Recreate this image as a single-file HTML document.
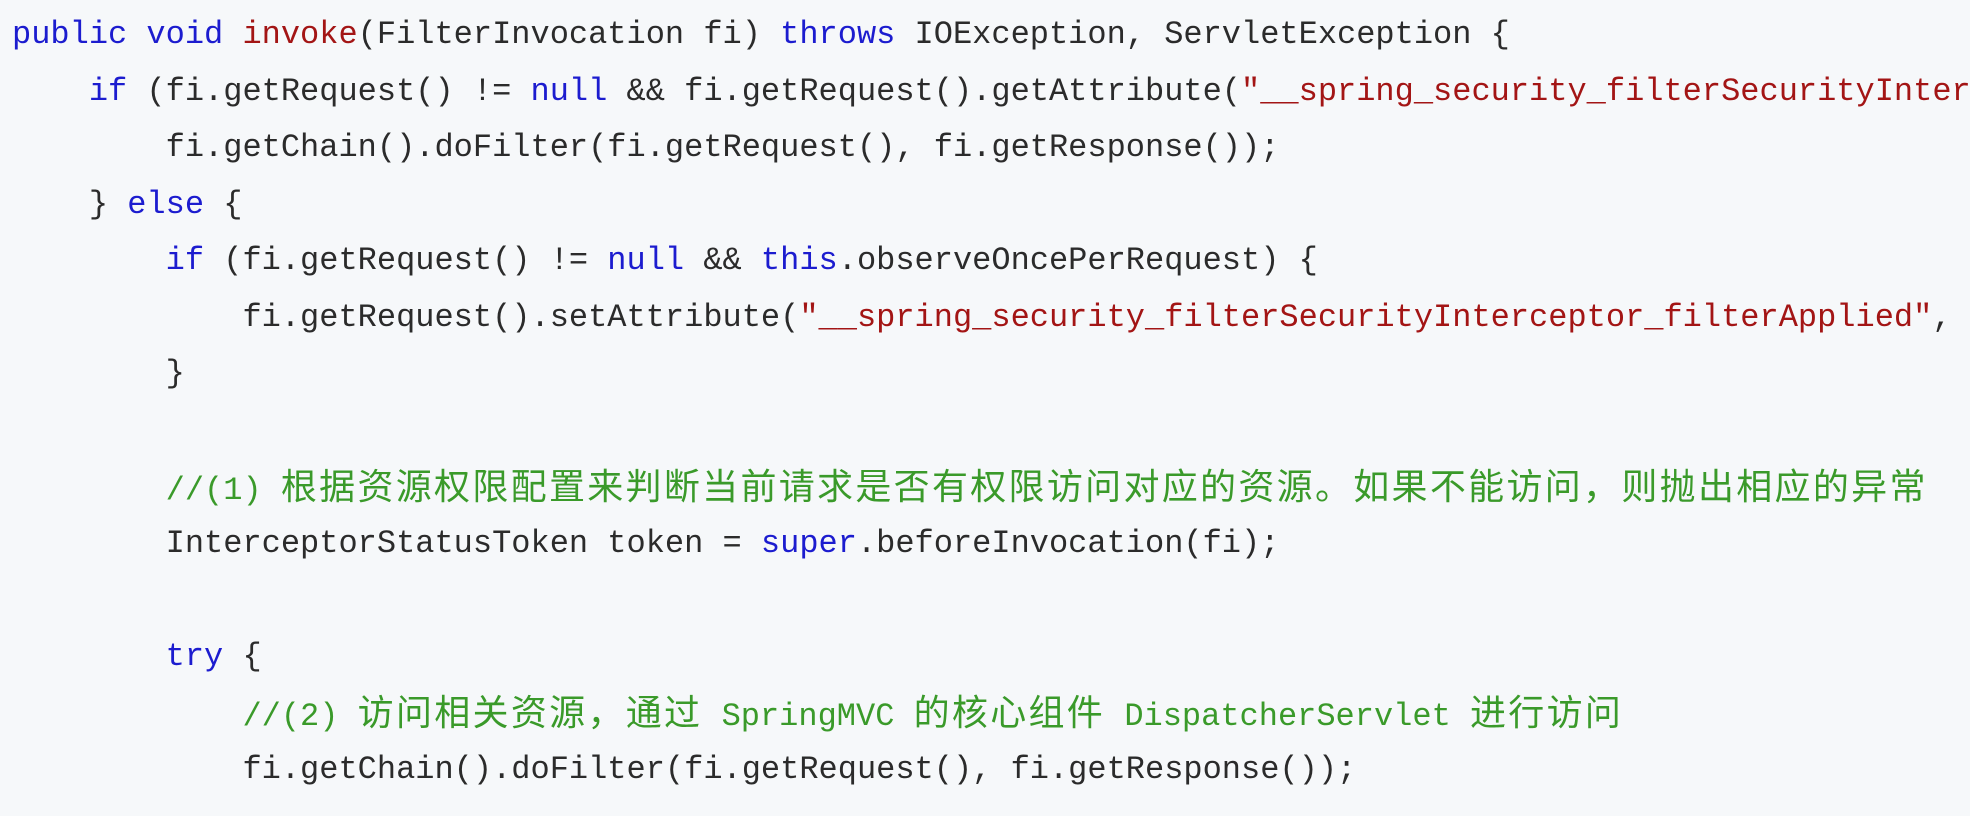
<!DOCTYPE html>
<html><head><meta charset="utf-8"><style>
html,body{margin:0;padding:0;}
body{width:1970px;height:816px;background:#f6f8fa;overflow:hidden;}
.p{padding:7px 0 0 12px;font-family:"Liberation Mono","Noto Sans CJK SC",monospace;font-size:32px;color:#2b2b2b;}
.p div{height:56.5px;line-height:56.5px;overflow:visible;white-space:pre;}
.k{color:#1c1ccf}.f{color:#a31515}.s{color:#a31515}.c{color:#3a9a2a;position:relative;top:4px;}
.z{letter-spacing:2.3px;font-size:36px;line-height:40px;font-family:"Noto Sans CJK SC",sans-serif;}
</style></head><body><div class="p">
<div><span class="k">public</span> <span class="k">void</span> <span class="f">invoke</span>(FilterInvocation fi) <span class="k">throws</span> IOException, ServletException {</div>
<div>    <span class="k">if</span> (fi.getRequest() != <span class="k">null</span> &amp;&amp; fi.getRequest().getAttribute(<span class="s">"__spring_security_filterSecurityInter</span></div>
<div>        fi.getChain().doFilter(fi.getRequest(), fi.getResponse());</div>
<div>    } <span class="k">else</span> {</div>
<div>        <span class="k">if</span> (fi.getRequest() != <span class="k">null</span> &amp;&amp; <span class="k">this</span>.observeOncePerRequest) {</div>
<div>            fi.getRequest().setAttribute(<span class="s">"__spring_security_filterSecurityInterceptor_filterApplied"</span>,</div>
<div>        }</div>
<div> </div>
<div>        <span class="c">//(1) <span class="z">根据资源权限配置来判断当前请求是否有权限访问对应的资源。如果不能访问，则抛出相应的异常</span></span></div>
<div>        InterceptorStatusToken token = <span class="k">super</span>.beforeInvocation(fi);</div>
<div> </div>
<div>        <span class="k">try</span> {</div>
<div>            <span class="c">//(2) <span class="z">访问相关资源，通过</span> SpringMVC <span class="z">的核心组件</span> DispatcherServlet <span class="z">进行访问</span></span></div>
<div>            fi.getChain().doFilter(fi.getRequest(), fi.getResponse());</div>
</div></body></html>
